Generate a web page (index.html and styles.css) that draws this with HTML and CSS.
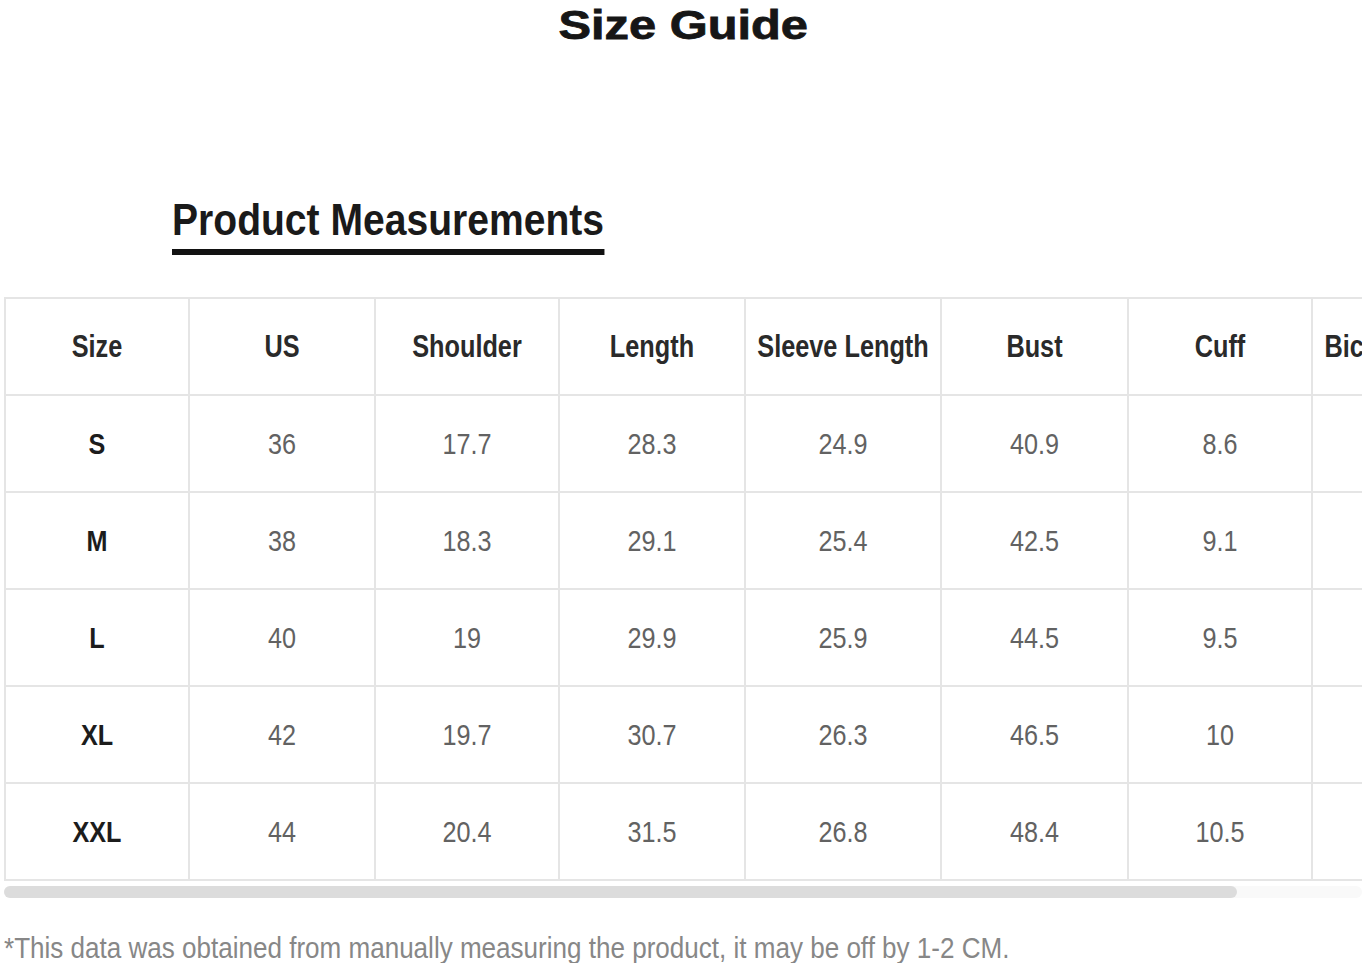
FILE: index.html
```html
<!DOCTYPE html>
<html lang="en">
<head>
<meta charset="utf-8">
<title>Size Guide</title>
<link rel="stylesheet" href="styles.css">
</head>
<body>
<div class="page">
  <h1 class="title"><span class="title-text">Size Guide</span></h1>
  <h2 class="subtitle">Product Measurements</h2>
  <div class="table-wrap">
    <table class="size-table">
      <colgroup>
        <col class="c1"><col class="c2"><col class="c3"><col class="c4"><col class="c5"><col class="c6"><col class="c7"><col class="c8">
      </colgroup>
      <thead>
        <tr>
          <th><div class="c">Size</div></th>
          <th><div class="c">US</div></th>
          <th><div class="c">Shoulder</div></th>
          <th><div class="c">Length</div></th>
          <th><div class="c">Sleeve Length</div></th>
          <th><div class="c">Bust</div></th>
          <th><div class="c">Cuff</div></th>
          <th><div class="c">Bicep Length</div></th>
        </tr>
      </thead>
      <tbody>
        <tr><td class="sz"><div class="c">S</div></td><td><div class="c">36</div></td><td><div class="c">17.7</div></td><td><div class="c">28.3</div></td><td><div class="c">24.9</div></td><td><div class="c">40.9</div></td><td><div class="c">8.6</div></td><td><div class="c">14.6</div></td></tr>
        <tr><td class="sz"><div class="c">M</div></td><td><div class="c">38</div></td><td><div class="c">18.3</div></td><td><div class="c">29.1</div></td><td><div class="c">25.4</div></td><td><div class="c">42.5</div></td><td><div class="c">9.1</div></td><td><div class="c">15.4</div></td></tr>
        <tr><td class="sz"><div class="c">L</div></td><td><div class="c">40</div></td><td><div class="c">19</div></td><td><div class="c">29.9</div></td><td><div class="c">25.9</div></td><td><div class="c">44.5</div></td><td><div class="c">9.5</div></td><td><div class="c">16.1</div></td></tr>
        <tr><td class="sz"><div class="c">XL</div></td><td><div class="c">42</div></td><td><div class="c">19.7</div></td><td><div class="c">30.7</div></td><td><div class="c">26.3</div></td><td><div class="c">46.5</div></td><td><div class="c">10</div></td><td><div class="c">16.9</div></td></tr>
        <tr><td class="sz"><div class="c">XXL</div></td><td><div class="c">44</div></td><td><div class="c">20.4</div></td><td><div class="c">31.5</div></td><td><div class="c">26.8</div></td><td><div class="c">48.4</div></td><td><div class="c">10.5</div></td><td><div class="c">17.7</div></td></tr>
      </tbody>
    </table>
  </div>
  <div class="scrollbar"><div class="scrollbar-thumb"></div></div>
  <p class="note"><span class="note-text">*This data was obtained from manually measuring the product, it may be off by 1-2 CM.</span></p>
</div>
</body>
</html>
```

FILE: styles.css
```css
html, body {
  margin: 0;
  padding: 0;
  background: #ffffff;
}

body {
  font-family: "Liberation Sans", Arial, sans-serif;
  color: #222;
}

.page {
  width: 1372px;
  overflow: hidden;
}

.title {
  margin: 5px 0 0;
  font-size: 40px;
  line-height: 1;
  font-weight: bold;
  color: #161616;
  text-align: center;
}

.title-text {
  display: inline-block;
  transform: scaleX(1.22);
  margin-left: -6px;
  -webkit-text-stroke: 0.8px #161616;
}

.subtitle {
  display: inline-block;
  margin: 153px 0 0 172px;
  padding-bottom: 7px;
  border-bottom: 6px solid #121212;
  font-size: 44px;
  line-height: 1;
  font-weight: bold;
  color: #1a1a1a;
  transform: scaleX(0.888);
  transform-origin: left top;
  white-space: nowrap;
}

.table-wrap {
  margin: 42px 10px 0 4px;
  overflow: hidden;
}

.size-table {
  border-collapse: collapse;
  table-layout: fixed;
  width: 1492px;
}

.c1 { width: 184px; }
.c2 { width: 186px; }
.c3 { width: 184px; }
.c4 { width: 186px; }
.c5 { width: 196px; }
.c6 { width: 187px; }
.c7 { width: 184px; }
.c8 { width: 185px; }

.size-table th,
.size-table td {
  border: 2px solid #e5e5e5;
  height: 95px;
  padding: 0;
  text-align: center;
  vertical-align: middle;
  white-space: nowrap;
}

.c {
  display: flex;
  justify-content: center;
  white-space: nowrap;
  transform: scaleX(0.84);
}

.size-table th {
  font-size: 32px;
  font-weight: bold;
  color: #2a2a2a;
}

.size-table th .c {
  transform: scaleX(0.79);
}

.size-table td {
  font-size: 30px;
  font-weight: normal;
  color: #626262;
}

.size-table td.sz {
  color: #1c1c1c;
  font-weight: bold;
}

.scrollbar {
  margin: 5px 10px 0 4px;
  height: 12px;
  background: #f9f9f9;
  border-radius: 6px;
}

.scrollbar-thumb {
  width: 1233px;
  height: 12px;
  background: #dcdcdc;
  border-radius: 6px;
}

.note {
  margin: 35px 0 0 4px;
  font-size: 30px;
  line-height: 1;
  color: #878787;
  white-space: nowrap;
}

.note-text {
  display: inline-block;
  transform: scaleX(0.868);
  transform-origin: left center;
}
```
